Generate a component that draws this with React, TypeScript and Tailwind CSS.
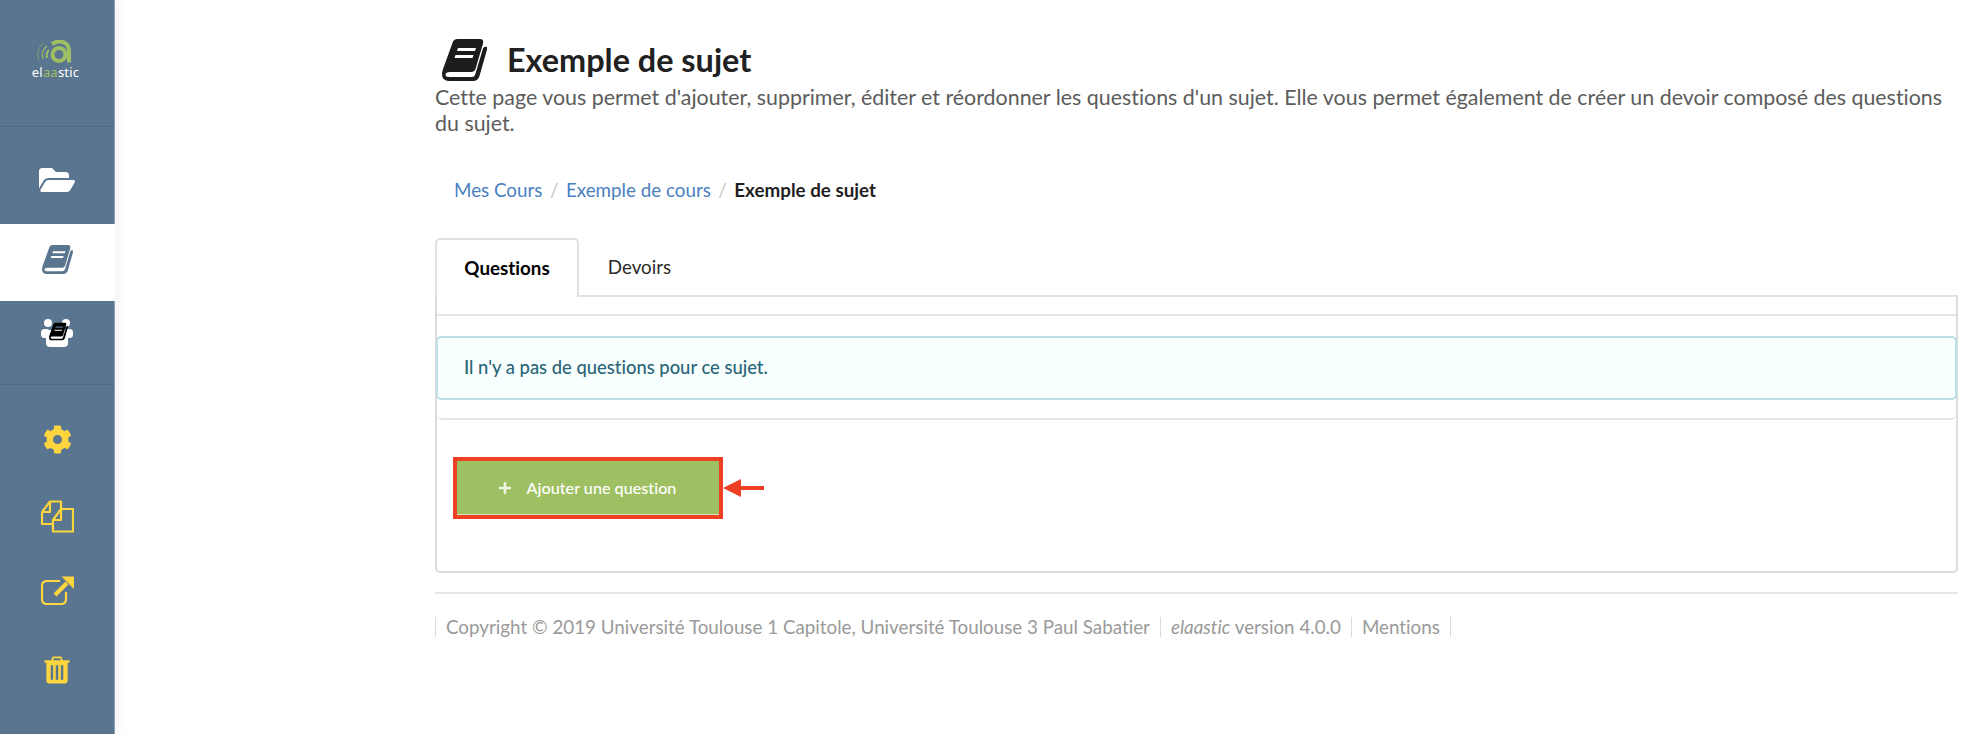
import { FaCog, FaFolderOpen, FaPlus } from 'react-icons/fa';

// slanted closed book, same shape in the header and the sidebar
const BookIcon = ({ className }: { className?: string }) => (
  <svg viewBox="0 0 45 42" className={className} fill="currentColor">
    <path
      fillRule="evenodd"
      d="M11 2.5 Q12 0 15 0 H38 Q42 0 41 4.5 L33.5 30 Q32.5 33 29 33 H8 Q3.5 33 3.5 35.5 Q3.5 38 7 38 H30 Q32.5 38 33.2 35.5 L41 9.5 Q42 7 45 8 L45 10.5 L37.5 37 Q36 42 31 42 H7 Q0 42 0 35 Q0 33 1 30 Z M16 9 L15 12 H33 L34 9 Z M13.5 16 L12.5 19 H30.5 L31.5 16 Z"
    />
  </svg>
);

const Logo = () => (
  <div className="flex flex-col items-center -ml-[3px]">
    <svg width="36" height="23" viewBox="0 0 36 23" fill="none">
      <path d="M2 20 C-1 13 2 6 7 3" stroke="#9fbf63" strokeWidth="1" opacity="0.6" />
      <path d="M6 19 C4 14 6 9 10 6" stroke="#9fbf63" strokeWidth="1.6" opacity="0.8" />
      <path d="M10 18 C9 15 10 12 12 10" stroke="#9fbf63" strokeWidth="2" />
      <circle cx="22" cy="14.5" r="6.5" stroke="#9fbf63" strokeWidth="4" />
      <path d="M15 4 C22 -0.5 32 1 32 11 L32 22.5" stroke="#9fbf63" strokeWidth="4" />
    </svg>
    <div className="text-[13px] leading-[16px] text-white mt-[1px] tracking-[0.2px] font-['Noto_Sans',sans-serif]">
      el<span className="text-[#9fbf63]">aa</span>stic
    </div>
  </div>
);

const GroupIcon = () => (
  <div className="relative w-[32px] h-[30px]">
    <svg width="32" height="30" viewBox="0 0 32 30" fill="white">
      <circle cx="7" cy="5" r="4" />
      <circle cx="25" cy="5" r="4" />
      <rect x="0" y="11" width="9" height="9" rx="3.5" />
      <rect x="23" y="11" width="9" height="9" rx="3.5" />
      <rect x="5" y="12" width="22" height="17" rx="4" />
    </svg>
    <BookIcon className="absolute left-[8px] top-[4px] text-black w-[19px] h-[19px]" />
  </div>
);

const CopyIcon = () => (
  <svg width="33" height="33" viewBox="0 0 33 33" fill="none" stroke="#fcd53f" strokeWidth="2.2" strokeLinejoin="round">
    <path d="M1 12 L9 1.5 H20 V9 M1 12 V24 H11" />
    <path d="M1 12 H9 V2" />
    <path d="M12 20 L20 9 H32 V31.5 H12 Z" />
    <path d="M12 20 H20 V10" />
  </svg>
);

const ExternalIcon = () => (
  <svg width="33" height="29" viewBox="0 0 33 29" fill="none">
    <path d="M19 5 H6 Q1 5 1 10 V23 Q1 28 6 28 H20 Q25 28 25 23 V16" stroke="#fcd53f" strokeWidth="2.2" />
    <path d="M14 19 L26 7" stroke="#fcd53f" strokeWidth="4" />
    <path d="M20.5 0.5 H33 V13 Z" fill="#fcd53f" />
  </svg>
);

const TrashIcon = () => (
  <svg width="26" height="28" viewBox="0 0 26 29">
    <path
      fillRule="evenodd"
      fill="#fcd53f"
      d="M0 4.5 H7 L8.5 0.5 H17.5 L19 4.5 H26 V7 H24 V26 Q24 28.5 21.5 28.5 H4.5 Q2 28.5 2 26 V7 H0 Z M9 4.5 H17 L16.2 2.4 H9.8 Z M6.5 9.5 V24.5 H9 V9.5 Z M11.7 9.5 V24.5 H14.3 V9.5 Z M17 9.5 V24.5 H19.5 V9.5 Z"
    />
  </svg>
);

const Sidebar = () => (
  <aside className="relative w-[115px] shrink-0 bg-[#5a758f] flex flex-col border-r border-[#8fa3b5] shadow-[3px_0_12px_rgba(0,0,0,0.05)]">
    <div className="h-[127px] shrink-0 flex justify-center pt-[40px] border-b border-[#526b83]">
      <Logo />
    </div>
    <div className="h-[97px] shrink-0 flex items-center justify-center pt-[9px] text-white">
      <FaFolderOpen className="w-[36px] h-[32px]" />
    </div>
    <div className="h-[77px] shrink-0 -mr-px flex items-center justify-center pb-[6px] bg-white text-[#5a758f]">
      <BookIcon className="w-[31px] h-[29px]" />
    </div>
    <div className="h-[84px] shrink-0 flex justify-center pt-[17px] border-b border-[#526b83]">
      <GroupIcon />
    </div>
    <div className="flex flex-col items-center pt-[39px]">
      <div className="h-[30px] flex items-center">
        <FaCog className="w-[29px] h-[29px] text-[#fcd53f]" />
      </div>
      <div className="h-[33px] mt-[46px]"><CopyIcon /></div>
      <div className="h-[29px] mt-[43px]"><ExternalIcon /></div>
      <div className="h-[28px] mt-[51px]"><TrashIcon /></div>
    </div>
  </aside>
);

const Main = () => (
  <main className="ml-[320px] w-[1523px] shrink-0 pt-[37px]">
    <div className="flex items-center h-[46px]">
      <BookIcon className="w-[45px] h-[42px] ml-[7px] text-[#1c1c1c]" />
      <h1 className="ml-[20px] text-[32.4px] leading-[46px] font-bold text-[#212121]">Exemple de sujet</h1>
    </div>
    <p className="text-[21.4px] leading-[26px] text-[#5c5c5c] mt-[1px]">
      Cette page vous permet d'ajouter, supprimer, éditer et réordonner les questions d'un sujet. Elle vous permet également de créer un devoir composé des questions du sujet.
    </p>

    <nav className="flex items-center mt-[42px] ml-[19px] h-[24px] text-[18.8px]">
      <span className="text-[#4a7fc1]">Mes Cours</span>
      <span className="mx-[7.5px] text-[#c4c4c4]">/</span>
      <span className="text-[#4a7fc1]">Exemple de cours</span>
      <span className="mx-[7.5px] text-[#c4c4c4]">/</span>
      <span className="font-bold text-[#1f1f1f]">Exemple de sujet</span>
    </nav>

    <div className="flex mt-[36px] h-[59px] border-b-2 border-[#e2e2e2] text-[18.8px]">
      <div className="w-[144px] h-[59px] flex items-center justify-center bg-white border-2 border-b-0 border-[#e2e2e2] rounded-t-[5px] font-bold text-black">
        Questions
      </div>
      <div className="w-[120px] flex items-center justify-center text-[#2b2b2b] pl-[1px] pt-[2px]">Devoirs</div>
    </div>

    <div className="h-[276px] border-2 border-t-0 border-[#dcdcdc] rounded-b-[5px]">
      <div className="h-[123px] border-b-2 border-[#e4e4e4] rounded-b-[5px]">
        <div className="h-[19px] border-b-2 border-[#e4e4e4]"></div>
        <div className="mt-[20px] h-[64px] -mx-[1px] flex items-center pl-[26px] bg-[#f8ffff] border-2 border-[#bfdfe6] rounded-[5px] text-[18.4px] font-medium text-[#2b6578]">
          Il n'y a pas de questions pour ce sujet.
        </div>
      </div>
      <div className="flex items-center mt-[37px] ml-[16px]">
        <button className="w-[270px] h-[62px] flex items-center justify-center pr-[2px] bg-[#9fbf63] border-4 border-[#ee4023] shadow-[inset_0_-1px_0_#d5e2b8] text-white text-[16.2px] font-medium">
          <FaPlus className="w-[14px] h-[14px] mr-[15px] text-[#f0f4e4]" />
          Ajouter une question
        </button>
        <svg width="42" height="20" viewBox="0 0 42 20" className="shrink-0" fill="#ee4023">
          <path d="M0 10 L18 1 V8 H41 V12 H18 V19 Z" />
        </svg>
      </div>
    </div>

    <div className="mt-[19px] border-t-2 border-[#e6e6e6]"></div>
    <footer className="flex mt-[23px] text-[18.8px] leading-[20px] text-[#9a9a9a]">
      <span className="border-l border-[#dcdcdc] px-[10px]">Copyright © 2019 Université Toulouse 1 Capitole, Université Toulouse 3 Paul Sabatier</span>
      <span className="border-l border-[#dcdcdc] px-[10px]"><em>elaastic</em> version 4.0.0</span>
      <span className="border-x border-[#dcdcdc] px-[10px]">Mentions</span>
    </footer>
  </main>
);

export default function App() {
  return (
    <div className="flex h-[734px] overflow-hidden bg-white font-['Lato',sans-serif] [font-variant-ligatures:none]">
      <Sidebar />
      <Main />
    </div>
  );
}
